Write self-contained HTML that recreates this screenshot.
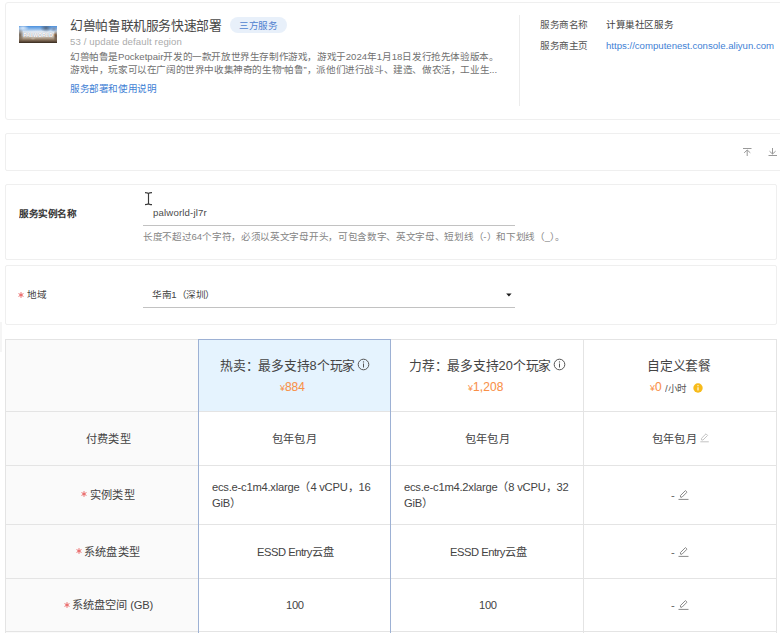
<!DOCTYPE html>
<html lang="zh-CN"><head><meta charset="utf-8">
<style>
html,body{margin:0;padding:0;background:#fff;}
body{width:780px;height:633px;overflow:hidden;position:relative;font-family:"Liberation Sans",sans-serif;color:#444;}
.a{position:absolute;white-space:nowrap;}
.card{position:absolute;box-sizing:border-box;border:1px solid #ececec;background:#fff;}
.t{position:absolute;white-space:nowrap;line-height:20px;transform:scale(.8);transform-origin:0 0;}
.f12{font-size:12px;}
.f14{font-size:14px;}
.f16{font-size:16px;}
.hl{position:absolute;height:1px;background:#e4e4e4;}
.vl{position:absolute;width:1px;background:#e4e4e4;}
.y{font-size:11px;-webkit-text-stroke:0;}
.pr{font-size:15px;-webkit-text-stroke:0.1px #f99048;}
</style></head><body>

<!-- ============ card 1 ============ -->
<div class="card" style="left:5px;top:2px;width:800px;height:118px;border-color:#efefef;border-radius:3px;"></div>
<div class="a" style="left:19px;top:26px;width:38px;height:17px;overflow:hidden;background:
  radial-gradient(ellipse 6px 3px at 4px 2px,rgba(225,236,248,.95),rgba(225,236,248,0)),
  radial-gradient(ellipse 6px 4px at 27px 2px,rgba(75,82,95,.75),rgba(75,82,95,0)),
  radial-gradient(ellipse 4px 3px at 35px 3px,rgba(120,140,170,.9),rgba(120,140,170,0)),
  radial-gradient(ellipse 14px 4px at 19px 8px,rgba(238,242,248,.95),rgba(238,242,248,0)),
  radial-gradient(ellipse 4px 7px at 1px 9px,rgba(80,62,45,.8),rgba(80,62,45,0)),
  radial-gradient(ellipse 3px 6px at 37px 10px,rgba(85,65,50,.95),rgba(85,65,50,0)),
  radial-gradient(ellipse 2px 2px at 36px 9px,rgba(240,150,60,.8),rgba(240,150,60,0)),
  radial-gradient(ellipse 3px 2px at 14px 12px,rgba(200,190,175,.8),rgba(200,190,175,0)),
  linear-gradient(180deg,#4a90de 0%,#86b6ea 16%,#dbe5f0 34%,#e8e8e6 55%,#c4b8a8 66%,#8f7a64 80%,#5a4838 92%,#33281d 100%);">
  <div style="position:absolute;left:0;top:5.6px;width:38px;text-align:center;font-size:5.3px;line-height:6px;font-weight:bold;color:#ffffff;letter-spacing:-0.05px;text-shadow:0 0 1px rgba(50,50,70,.6);">PALWORLD</div>
</div>
<div class="t f16" style="left:70px;top:18px;color:#484848;letter-spacing:-0.2px;">幻兽帕鲁联机服务快速部署</div>
<div class="a" style="left:230px;top:17px;width:57px;height:16px;border-radius:8px;background:#e8f0fa;"></div>
<div class="t f12" style="left:239.3px;top:17.5px;color:#4f7fcf;">三方服务</div>
<div class="t f12" style="left:70px;top:33.7px;color:#ababab;letter-spacing:0.15px;">53 / update default region</div>
<div class="t f12" style="left:70px;top:49.6px;color:#717171;width:540px;white-space:normal;line-height:16.8px;height:33.6px;overflow:hidden;">幻兽帕鲁是Pocketpair开发的一款开放世界生存制作游戏，游戏于2024年1月18日发行抢先体验版本。游戏中，玩家可以在广阔的世界中收集神奇的生物“帕鲁”，派他们进行战斗、建造、做农活，工业生...</div>
<div class="t f12" style="left:70px;top:80.5px;color:#3f7fd5;">服务部署和使用说明</div>

<div class="vl" style="left:519px;top:15px;height:91px;background:#ececec;"></div>
<div class="t f12" style="left:540px;top:17px;color:#555;">服务商名称</div>
<div class="t f12" style="left:606px;top:17px;color:#444;">计算巢社区服务</div>
<div class="t f12" style="left:540px;top:37.5px;color:#555;">服务商主页</div>
<div class="t f12" style="left:606px;top:37.5px;color:#3f7fd5;">https://computenest.console.aliyun.com</div>

<!-- ============ card 2 ============ -->
<div class="card" style="left:5px;top:133px;width:800px;height:38px;border-color:#efefef;border-radius:2px;"></div>
<svg class="a" style="left:740px;top:145px" width="40" height="14" viewBox="0 0 40 14">
  <g fill="none" stroke="#999" stroke-width="1">
    <path d="M3 3.5H11.5"/>
    <path d="M7.2 5V11"/>
    <path d="M4.2 7.8L7.2 5L10.3 7.8"/>
    <path d="M32.5 3V9"/>
    <path d="M29.5 6.2L32.5 9L35.6 6.2"/>
    <path d="M28.5 10.5H37"/>
  </g>
</svg>

<!-- ============ card 3 ============ -->
<div class="card" style="left:5px;top:184px;width:772px;height:76px;border-color:#efefef;border-radius:2px;"></div>
<div class="t f12" style="left:19px;top:205.5px;font-weight:bold;color:#333;">服务实例名称</div>
<svg class="a" style="left:143px;top:191px" width="10" height="15" viewBox="0 0 10 15">
  <g fill="none" stroke="#3a3a3a" stroke-width="1.15">
    <path d="M2 1.6C3.6 1.6 5.5 1.8 5.5 3V12.2C5.5 13.4 3.6 13.6 2 13.6M9 1.6C7.4 1.6 5.5 1.8 5.5 3M9 13.6C7.4 13.6 5.5 13.4 5.5 12.2"/>
  </g>
</svg>
<div class="t f12" style="left:152.5px;top:204.8px;color:#4a4a4a;letter-spacing:0.2px;">palworld-jl7r</div>
<div class="hl" style="left:143px;top:225px;width:372px;background:#c2c2c2;"></div>
<div class="t f12" style="left:143px;top:229px;color:#858585;letter-spacing:0.11px;">长度不超过64个字符，必须以英文字母开头，可包含数字、英文字母、短划线（-）和下划线（_）。</div>

<!-- ============ card 4 ============ -->
<div class="card" style="left:5px;top:265px;width:772px;height:60px;border-color:#efefef;border-radius:2px;"></div>
<svg class="a" style="left:18px;top:291.5px" width="6" height="6" viewBox="0 0 6 6"><g stroke="#ea6666" stroke-width="1" fill="none"><path d="M3 0.2V5.8M0.55 1.6L5.45 4.4M0.55 4.4L5.45 1.6"/></g></svg>
<div class="t f12" style="left:27px;top:287px;color:#444;">地域</div>
<div class="t f12" style="left:152px;top:287px;color:#444;">华南1（深圳）</div>
<div class="hl" style="left:143px;top:307px;width:372px;background:#c2c2c2;"></div>
<svg class="a" style="left:505px;top:292px" width="8" height="6" viewBox="0 0 8 6"><path d="M1.2 1.6H6.6L3.9 4.4Z" fill="#1a1a1a"/></svg>

<!-- ============ table ============ -->
<div class="a" style="left:0;top:322px;width:2px;height:30px;background:#f5f5f5;"></div>
<div class="a" style="left:5px;top:339px;width:772px;height:300px;box-sizing:border-box;border-left:1px solid #e4e4e4;border-top:1px solid #e4e4e4;border-right:1px solid #e4e4e4;"></div>
<div class="a" style="left:6px;top:340px;width:192px;height:300px;background:#fafafa;"></div>
<div class="a" style="left:199px;top:340px;width:191px;height:71px;background:#e5f3fe;"></div>
<div class="hl" style="left:5px;top:411px;width:772px;"></div>
<div class="hl" style="left:5px;top:465px;width:772px;"></div>
<div class="hl" style="left:5px;top:524px;width:772px;"></div>
<div class="hl" style="left:5px;top:578px;width:772px;"></div>
<div class="hl" style="left:5px;top:631px;width:772px;"></div>
<div class="vl" style="left:583px;top:339px;height:300px;"></div>
<div class="a" style="left:198px;top:339px;width:193px;height:300px;box-sizing:border-box;border:1px solid #9db1d4;border-bottom:none;"></div>

<!-- header -->
<div class="t f16" style="left:220px;top:357.5px;color:#444;">热卖：最多支持8个玩家</div>
<svg class="a" style="left:357px;top:358px" width="13" height="13" viewBox="0 0 13 13"><g fill="none" stroke="#555" stroke-width="1"><circle cx="6.5" cy="6.5" r="5.3"/><path d="M6.5 5.5V9.5"/></g><circle cx="6.5" cy="3.9" r="0.7" fill="#555"/></svg>
<div class="t pr" style="left:280px;top:378.9px;color:#f99048;"><span class="y">¥</span>884</div>

<div class="t f16" style="left:409px;top:357.5px;color:#444;">力荐：最多支持20个玩家</div>
<svg class="a" style="left:553px;top:358px" width="13" height="13" viewBox="0 0 13 13"><g fill="none" stroke="#555" stroke-width="1"><circle cx="6.5" cy="6.5" r="5.3"/><path d="M6.5 5.5V9.5"/></g><circle cx="6.5" cy="3.9" r="0.7" fill="#555"/></svg>
<div class="t pr" style="left:467.8px;top:378.9px;color:#f99048;letter-spacing:0.12px;"><span class="y">¥</span>1,208</div>

<div class="t f16" style="left:647px;top:357.5px;color:#444;">自定义套餐</div>
<div class="t pr" style="left:650px;top:378.9px;color:#f99048;"><span class="y">¥</span>0</div>
<div class="t f12" style="left:665px;top:381px;color:#555;">/小时</div>
<svg class="a" style="left:693px;top:383px" width="10" height="10" viewBox="0 0 10 10"><circle cx="5" cy="5" r="4.7" fill="#f7bb1a"/><path d="M5 4.2V7.6" stroke="#fff" stroke-width="1.1"/><circle cx="5" cy="2.7" r="0.65" fill="#fff"/></svg>

<!-- row 1 -->
<div class="t f14" style="left:86px;top:430.5px;color:#444;">付费类型</div>
<div class="t f14" style="left:272px;top:430.5px;color:#444;">包年包月</div>
<div class="t f14" style="left:465px;top:430.5px;color:#444;">包年包月</div>
<div class="t f14" style="left:652px;top:430.5px;color:#444;">包年包月</div>
<svg class="a" style="left:699px;top:432px" width="11" height="11" viewBox="0 0 11 11"><g fill="none" stroke="#c4c4c4" stroke-width="1"><path d="M2.6 8L2.4 6.4L7 1.8L8.6 3.4L4 8Z"/><path d="M1.3 9.8H9.8"/></g></svg>

<!-- row 2 -->
<svg class="a" style="left:81.2px;top:491.4px" width="6" height="6" viewBox="0 0 6 6"><g stroke="#ea6666" stroke-width="1" fill="none"><path d="M3 0.2V5.8M0.55 1.6L5.45 4.4M0.55 4.4L5.45 1.6"/></g></svg>
<div class="t f14" style="left:90px;top:487px;color:#444;">实例类型</div>
<div class="t f14" style="left:211.5px;top:479px;color:#444;letter-spacing:-0.3px;">ecs.e-c1m4.xlarge（4 vCPU，16</div>
<div class="t f14" style="left:211.5px;top:495px;color:#444;letter-spacing:-0.3px;">GiB）</div>
<div class="t f14" style="left:404px;top:479px;color:#444;letter-spacing:-0.3px;">ecs.e-c1m4.2xlarge（8 vCPU，32</div>
<div class="t f14" style="left:404px;top:495px;color:#444;letter-spacing:-0.3px;">GiB）</div>
<div class="t f14" style="left:671px;top:487px;color:#666;">-</div>
<svg class="a" style="left:678px;top:489px" width="11" height="11" viewBox="0 0 11 11"><g fill="none" stroke="#8a8a8a" stroke-width="1"><path d="M2.6 8.2L2.4 6.6L7.4 1.6L9 3.2L4 8.2Z"/><path d="M0.5 10.4H10.5"/></g></svg>

<!-- row 3 -->
<svg class="a" style="left:75.5px;top:547.8px" width="6" height="6" viewBox="0 0 6 6"><g stroke="#ea6666" stroke-width="1" fill="none"><path d="M3 0.2V5.8M0.55 1.6L5.45 4.4M0.55 4.4L5.45 1.6"/></g></svg>
<div class="t f14" style="left:84px;top:543.5px;color:#444;">系统盘类型</div>
<div class="t f14" style="left:257px;top:543.5px;color:#444;letter-spacing:-0.6px;">ESSD Entry云盘</div>
<div class="t f14" style="left:450px;top:543.5px;color:#444;letter-spacing:-0.6px;">ESSD Entry云盘</div>
<div class="t f14" style="left:671px;top:543.5px;color:#666;">-</div>
<svg class="a" style="left:678px;top:545.5px" width="11" height="11" viewBox="0 0 11 11"><g fill="none" stroke="#8a8a8a" stroke-width="1"><path d="M2.6 8.2L2.4 6.6L7.4 1.6L9 3.2L4 8.2Z"/><path d="M0.5 10.4H10.5"/></g></svg>

<!-- row 4 -->
<svg class="a" style="left:63.5px;top:601.8px" width="6" height="6" viewBox="0 0 6 6"><g stroke="#ea6666" stroke-width="1" fill="none"><path d="M3 0.2V5.8M0.55 1.6L5.45 4.4M0.55 4.4L5.45 1.6"/></g></svg>
<div class="t f14" style="left:72px;top:596.5px;color:#444;letter-spacing:-0.2px;">系统盘空间 (GB)</div>
<div class="t f14" style="left:286px;top:596.5px;color:#444;letter-spacing:-0.4px;">100</div>
<div class="t f14" style="left:479px;top:596.5px;color:#444;letter-spacing:-0.4px;">100</div>
<div class="t f14" style="left:671px;top:596.5px;color:#666;">-</div>
<svg class="a" style="left:678px;top:598.5px" width="11" height="11" viewBox="0 0 11 11"><g fill="none" stroke="#8a8a8a" stroke-width="1"><path d="M2.6 8.2L2.4 6.6L7.4 1.6L9 3.2L4 8.2Z"/><path d="M0.5 10.4H10.5"/></g></svg>

</body></html>
